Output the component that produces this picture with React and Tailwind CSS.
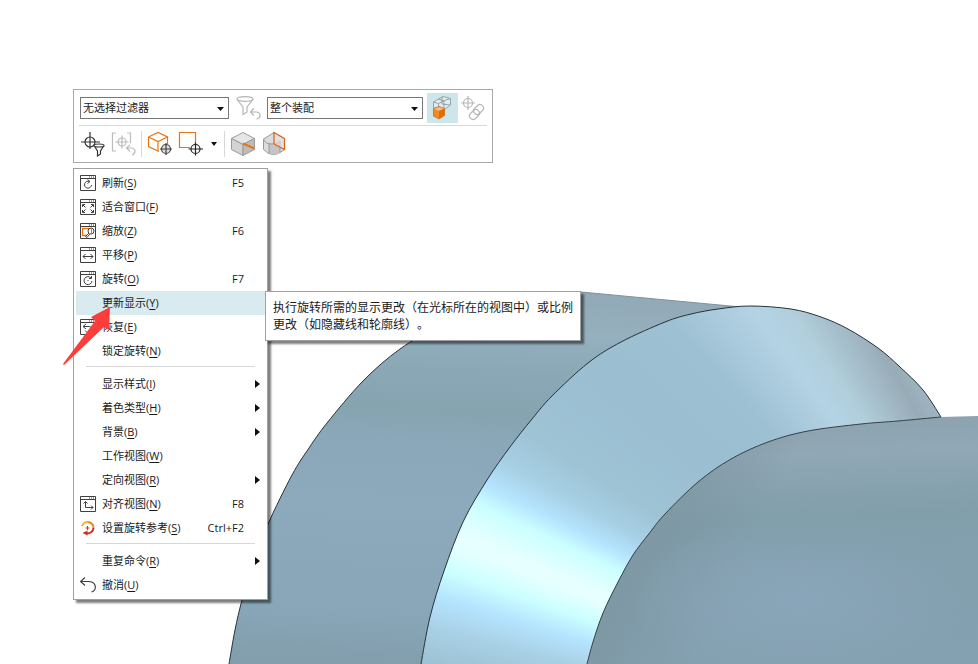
import React from "react";

const INK = "#3f3f3f";
const ORANGE = "#e87511";

// Smooth curve through a list of points
const curve = (points) => {
  let d = `M${points[0][0]} ${points[0][1]}`;
  for (let i = 0; i < points.length - 1; i++) {
    const p0 = points[i - 1] || points[i];
    const p1 = points[i];
    const p2 = points[i + 1];
    const p3 = points[i + 2] || p2;
    d += `C${p1[0] + (p2[0] - p0[0]) / 6} ${p1[1] + (p2[1] - p0[1]) / 6}`;
    d += ` ${p2[0] - (p3[0] - p1[0]) / 6} ${p2[1] - (p3[1] - p1[1]) / 6}`;
    d += ` ${p2[0]} ${p2[1]}`;
  }
  return d;
};

const OUTER_EDGE = curve([
  [229, 664], [235, 630], [242, 600], [253, 562], [268, 524], [292, 475], [309, 448], [327, 423],
  [363, 381], [400, 349], [440, 326], [500, 302], [581, 292],
]);
const RING_EDGE = curve([
  [421, 664], [430, 617], [444, 571], [463, 522], [487, 480], [510, 447], [532, 419], [552, 396],
  [588, 363], [621, 342], [665, 322], [691, 314], [718, 309], [750, 306], [791, 309], [821, 317],
  [848, 329], [878, 348], [900, 367], [923, 390], [941, 417],
]);
const FRONT_EDGE = curve([
  [587, 664], [593, 642], [603, 613], [618, 582], [633, 555], [648, 535], [665, 514], [698, 482],
  [731, 459], [768, 442], [808, 431], [861, 424], [898, 421], [941, 417],
]);

const ModelView = () => (
  <svg
    className="absolute inset-0 h-full w-full"
    viewBox="0 0 978 664"
    preserveAspectRatio="xMidYMid slice"
    aria-hidden="true"
  >
    <defs>
      <linearGradient id="back" gradientUnits="userSpaceOnUse" x1="520" y1="290" x2="500" y2="664">
        <stop offset="0" stopColor="#92a9b6" />
        <stop offset="0.11" stopColor="#95b0be" />
        <stop offset="0.22" stopColor="#8aa8b6" />
        <stop offset="0.33" stopColor="#86a3b0" />
        <stop offset="0.42" stopColor="#8aa8b9" />
        <stop offset="0.6" stopColor="#8caabc" />
        <stop offset="0.88" stopColor="#88a6b8" />
        <stop offset="1" stopColor="#839fae" />
      </linearGradient>
      <linearGradient id="front" gradientUnits="userSpaceOnUse" x1="860" y1="424" x2="870" y2="664">
        <stop offset="0" stopColor="#8da3b0" />
        <stop offset="0.12" stopColor="#91a8b6" />
        <stop offset="0.24" stopColor="#89a3b0" />
        <stop offset="0.38" stopColor="#819eab" />
        <stop offset="0.6" stopColor="#83a0af" />
        <stop offset="1" stopColor="#84a1b1" />
      </linearGradient>
      <radialGradient id="glow" gradientUnits="userSpaceOnUse" cx="0" cy="0" r="1" gradientTransform="translate(800 600) scale(170 85)">
        <stop offset="0" stopColor="#89a5b9" />
        <stop offset="1" stopColor="#89a5b9" stopOpacity="0" />
      </radialGradient>
      <linearGradient id="edge" gradientUnits="userSpaceOnUse" x1="620" y1="560" x2="720" y2="610">
        <stop offset="0" stopColor="#7d96a2" stopOpacity="0.9" />
        <stop offset="1" stopColor="#7d96a2" stopOpacity="0" />
      </linearGradient>
      <clipPath id="ring">
        <path d={`${RING_EDGE}L978 417V664Z`} />
      </clipPath>
    </defs>

    <path d={`${OUTER_EDGE}L741 307L760 664Z`} fill="url(#back)" />
    <path d={OUTER_EDGE} fill="none" stroke="#26333a" />
    <path d="M581 292L741 307" stroke="#7f929d" />

    {/* Conical face, shaded around its apex */}
    <g clipPath="url(#ring)">
      <foreignObject width="978" height="664">
        <div className="h-full w-full bg-[conic-gradient(from_270deg_at_1120px_805px,#9cc1d3_0deg,#9cc1d3_11.5deg,#a9d1e6_14.5deg,#b5e4ff_17deg,#ccffff_19.2deg,#e6ffff_21.2deg,#e6ffff_22.4deg,#ccffff_25deg,#b5e4ff_26.8deg,#a7d0e5_29deg,#9ec3d5_32deg,#9bbed1_40deg,#9ec0d3_47deg,#b4d3e5_53.5deg,#b0cedb_56.5deg,#a3b9c6_60deg,#98abb7_62.5deg,#9fb4c2_65deg,#9fb4c2_90deg)]" />
      </foreignObject>
    </g>
    <path d={RING_EDGE} fill="none" stroke="#26333a" />

    <path d={`${FRONT_EDGE}L978 416V664Z`} fill="url(#front)" />
    <path d={`${FRONT_EDGE}L978 416V664Z`} fill="url(#edge)" />
    <path d={`${FRONT_EDGE}L978 416V664Z`} fill="url(#glow)" />
    <path d={FRONT_EDGE} fill="none" stroke="#33424a" />
  </svg>
);

/* ---- toolbar icons, 26px grid ---- */

const ToolIcon = ({ children }) => (
  <svg width="26" height="26" viewBox="0 0 26 26" fill="none" aria-hidden="true">
    {children}
  </svg>
);

const ResetFilterIcon = () => (
  <ToolIcon>
    <g stroke="#b5b5b5" strokeWidth="1.2">
      <ellipse cx="9" cy="4" rx="8" ry="2.4" />
      <path d="M1 4.5L7 12V19.5L11 17V12L17 4.5" />
      <path d="M18 13.5L14.5 17L18 20.5M14.5 17H20C25 17 25.500 23 20.500 24" />
    </g>
  </ToolIcon>
);

const AssemblyIcon = () => (
  <ToolIcon>
    <g stroke="#8f9ba0" strokeWidth="0.9" strokeLinejoin="round">
      <path d="M3.500 7L13 1.500L20.500 3.500V10L14.500 14.500L9 12L3.500 13.500Z" fill="#e1ecef" />
      <path d="M3.500 7L8.500 8.500L14.500 5.500L20.500 3.500M8.500 4L14 6V14M8.500 8.500V12M12 2V9L20 10" />
    </g>
    <path d="M3.500 13.500L9 11.500L14.500 13.500V20.500L9 24L3.500 21Z" fill="#f58a1f" stroke="#c86a1b" strokeWidth="0.8" />
    <path d="M4 13.700L9 12L14 13.700L9 16Z" fill="#f6b98a" />
    <path d="M9 16L14.200 13.700V20.300L9 23.500Z" fill="#e06c08" />
  </ToolIcon>
);

const LinkPointIcon = () => (
  <ToolIcon>
    <g stroke="#b7b7b7" strokeWidth="1.2">
      <circle cx="8" cy="8" r="4.500" />
      <path d="M8 1V15M1 8H15" />
      <rect x="13" y="11" width="11" height="7" rx="3.500" transform="rotate(-42 18.500 14.500)" />
      <rect x="9" y="16" width="11" height="7" rx="3.500" transform="rotate(-42 14.500 19.500)" />
    </g>
  </ToolIcon>
);

const PointFilterIcon = () => (
  <ToolIcon>
    <g stroke="#333" strokeWidth="1.2">
      <circle cx="10" cy="11" r="5" />
      <path d="M10 1V18M1 11H20" />
      <path d="M14 14.500L17.500 20V25L20.500 23V20L24 14.500" fill="#fff" />
      <ellipse cx="19" cy="14.500" rx="5" ry="1.500" fill="#fff" />
    </g>
  </ToolIcon>
);

const ResetPointIcon = () => (
  <ToolIcon>
    <g stroke="#bcbcbc" strokeWidth="1.2">
      <path d="M5 2H1.500V20H5M16 2H19.500V12" />
      <circle cx="11" cy="11" r="4" />
      <path d="M11 4.500V17.500M4.500 11H17.500" />
      <path d="M19 14L15.500 17L19 20.500M15.500 17H21C25 17.500 25 23 21 24" />
    </g>
  </ToolIcon>
);

const CubePointIcon = () => (
  <ToolIcon>
    <path
      d="M1.500 6L11 1.500L20.500 6V13M1.500 6V15.500L12 20.500M1.500 6L11 10.500L20.500 6M11 10.500V20"
      stroke={ORANGE}
      strokeWidth="1.2"
    />
    <g stroke="#444" strokeWidth="1.2">
      <circle cx="19" cy="18" r="4.500" fill="#ddd" />
      <path d="M19 12V24M13 18H25" />
    </g>
  </ToolIcon>
);

const RectPointIcon = () => (
  <ToolIcon>
    <path d="M12 16.500H1.500V1.500H17.500V13" stroke={ORANGE} strokeWidth="1.2" />
    <g stroke="#222" strokeWidth="1.2">
      <circle cx="17.500" cy="18" r="4.500" />
      <path d="M17.500 11.500V24.500M10.500 18H25" />
    </g>
  </ToolIcon>
);

const GreyCubeIcon = () => (
  <ToolIcon>
    <g stroke="#9a9a9a" strokeLinejoin="round">
      <path d="M1.500 7.500L13 1.500L24.500 7.500L13 13.500Z" fill="#e6e6e6" />
      <path d="M1.500 7.500L13 13.500V24.500L1.500 18.500Z" fill="#d3d3d3" />
      <path d="M24.500 7.500L13 13.500V24.500L24.500 18.500Z" fill="#bcbcbc" />
    </g>
    <path d="M13 12.500L24.500 17.500" stroke={ORANGE} strokeWidth="2" />
  </ToolIcon>
);

const RoundCubeIcon = () => (
  <ToolIcon>
    <path d="M2.500 8L13 1.500L23.500 7.500V18.500L19 21.500Q11 27 2.500 18.500Z" fill="#dcdcdc" stroke="#999" />
    <path d="M11 13Q16 13 19 10V22Q14 25 8 23V12Z" fill="#c4c4c4" />
    <path d="M2.500 8Q4 13 11 13Q16 13 19 10V22M8 12.500V23" stroke="#999" />
    <path d="M13 1.500L23.500 7.500V18.500L13 13Z" fill="#e4e4e4" fillOpacity="0.6" />
    <path d="M13 13V1.500L23.500 7.500V18.500L13 13" stroke="#d9631c" strokeWidth="1.2" />
  </ToolIcon>
);

/* ---- menu icons, 16px grid ---- */

const WindowIcon = ({ children }) => (
  <svg width="16" height="16" viewBox="0 0 16 16" fill="none" stroke={INK} aria-hidden="true">
    <path d="M0.500 0.500H15.500V15.500H0.500ZM0.500 3.500H15.500" />
    <path d="M9 2H10M11 2H12M13 2H14" />
    {children}
  </svg>
);

const RefreshIcon = () => (
  <WindowIcon>
    <path d="M9.500 6.500A3.500 3.500 0 1 0 11.500 10M7.500 4.500L10 6.500L7.500 8.500" />
  </WindowIcon>
);

const FitIcon = () => (
  <WindowIcon>
    <path d="M2.500 8V5.500H5M11 5.500H13.500V8M2.500 11V13.500H5M11 13.500H13.500V11M3 6L5.500 8.500M13 6L10.500 8.500M3 13L5.500 10.500M13 13L10.500 10.500" />
  </WindowIcon>
);

const ZoomIcon = () => (
  <WindowIcon>
    <path d="M7 12.500H2.500V5.500H9" stroke={ORANGE} strokeWidth="1.3" />
    <circle cx="11" cy="8" r="3" fill="#fff" />
    <path d="M11.500 5V11" stroke={ORANGE} />
    <path d="M9 10L5.500 13.500L7 14.500L10 11" fill="#fff" />
  </WindowIcon>
);

const PanIcon = () => (
  <WindowIcon>
    <path d="M3 9.500H13M5.500 7L3 9.500L5.500 12M10.500 7L13 9.500L10.500 12" />
  </WindowIcon>
);

const RotateIcon = () => (
  <WindowIcon>
    <path d="M11 7A4 4 0 1 0 12 10M11.500 5V7.500H9" />
    <path d="M7.500 9.500H8.500" />
  </WindowIcon>
);

const RestoreIcon = () => (
  <WindowIcon>
    <path d="M6 5L3 7.500L6 10M3 7.500H9C13 8 13 13 9 13.500M5 11.500L7 13.500" />
  </WindowIcon>
);

const AlignIcon = () => (
  <WindowIcon>
    <path d="M5.500 6V11.500H13M3.500 7.500L5.500 5.500L7.500 7.500M11 9.500L13 11.500L11 13.500" />
  </WindowIcon>
);

const RotateRefIcon = () => (
  <svg width="16" height="16" viewBox="0 0 16 16" fill="none" aria-hidden="true">
    <path d="M2 6Q3.500 1.800 8 2" stroke="#f8b820" strokeWidth="2" />
    <path d="M8 2Q13.500 3 13.500 8" stroke="#f08a1d" strokeWidth="2" />
    <path d="M13.500 8Q13 13 7 13.500" stroke="#dc2b1c" strokeWidth="2" />
    <path d="M7.500 10.500L2.500 13L7.500 15.500Z" fill="#dc2b1c" />
    <path d="M7.500 6V10M5.500 8H9.500" stroke="#d9341f" />
  </svg>
);

const UndoIcon = () => (
  <svg width="16" height="16" viewBox="0 0 16 16" fill="none" stroke={INK} strokeWidth="1.2" aria-hidden="true">
    <path d="M5 0.500L0.500 4.500L5 8.500M0.500 4.500H9C17 5 17 14 11.500 15" />
  </svg>
);

const FilterSelect = ({ label, value, className }) => (
  <span className={`relative ${className}`}>
    <select
      aria-label={label}
      className="block h-[22px] w-full appearance-none border border-[#777] bg-white pl-[2px] text-[11px] text-[#1a1a1a]"
    >
      <option>{value}</option>
    </select>
    <svg className="pointer-events-none absolute right-[5px] top-[10px]" width="7" height="4" viewBox="0 0 7 4" aria-hidden="true">
      <path d="M0 0H7L3.500 4Z" fill="#111" />
    </svg>
  </span>
);

const SelectionToolbar = () => (
  <div role="toolbar" aria-label="选择" className="w-[420px] border border-[#a9a9a9] bg-white px-[5px] pt-[3px]">
    <div className="flex h-[30px] items-center">
      <FilterSelect label="选择过滤器" value="无选择过滤器" className="ml-px w-[149px]" />
      <button type="button" aria-label="重置过滤器" className="ml-[7px]">
        <ResetFilterIcon />
      </button>
      <FilterSelect label="选择范围" value="整个装配" className="ml-[5px] w-[156px]" />
      <button type="button" aria-label="装配" className="ml-1 flex h-[30px] w-[31px] items-center justify-center bg-[#cde6eb]">
        <AssemblyIcon />
      </button>
      <button type="button" aria-label="关联点" className="ml-[2px]">
        <LinkPointIcon />
      </button>
    </div>
    <div className="mt-[2px] border-t border-[#d8d8d8]" />
    <div className="flex h-9 items-center">
      <button type="button" aria-label="点过滤器" className="ml-px">
        <PointFilterIcon />
      </button>
      <button type="button" aria-label="重置点" className="ml-[5px]">
        <ResetPointIcon />
      </button>
      <span className="ml-1 h-[26px] w-px bg-[#d8d8d8]" />
      <button type="button" aria-label="体上的点" className="ml-[5px]">
        <CubePointIcon />
      </button>
      <button type="button" aria-label="矩形选择" className="ml-[5px]">
        <RectPointIcon />
      </button>
      <button type="button" aria-label="更多" className="ml-[7px]">
        <svg width="6" height="4" viewBox="0 0 6 4" aria-hidden="true">
          <path d="M0 0H6L3 4Z" fill="#111" />
        </svg>
      </button>
      <span className="ml-[7px] h-[26px] w-px bg-[#d8d8d8]" />
      <button type="button" aria-label="面上的边" className="ml-[5px]">
        <GreyCubeIcon />
      </button>
      <button type="button" aria-label="相切面" className="ml-[5px]">
        <RoundCubeIcon />
      </button>
    </div>
  </div>
);

const menuGroups = [
  [
    { label: "刷新", hotkey: "S", shortcut: "F5", icon: <RefreshIcon /> },
    { label: "适合窗口", hotkey: "F", icon: <FitIcon /> },
    { label: "缩放", hotkey: "Z", shortcut: "F6", icon: <ZoomIcon /> },
    { label: "平移", hotkey: "P", icon: <PanIcon /> },
    { label: "旋转", hotkey: "O", shortcut: "F7", icon: <RotateIcon /> },
    {
      label: "更新显示",
      hotkey: "Y",
      active: true,
      tip: "执行旋转所需的显示更改（在光标所在的视图中）或比例更改（如隐藏线和轮廓线）。",
    },
    { label: "恢复", hotkey: "E", icon: <RestoreIcon /> },
    { label: "锁定旋转", hotkey: "N" },
  ],
  [
    { label: "显示样式", hotkey: "I", submenu: true },
    { label: "着色类型", hotkey: "H", submenu: true },
    { label: "背景", hotkey: "B", submenu: true },
    { label: "工作视图", hotkey: "W" },
    { label: "定向视图", hotkey: "R", submenu: true },
    { label: "对齐视图", hotkey: "N", shortcut: "F8", icon: <AlignIcon /> },
    { label: "设置旋转参考", hotkey: "S", shortcut: "Ctrl+F2", icon: <RotateRefIcon /> },
  ],
  [
    { label: "重复命令", hotkey: "R", submenu: true },
    { label: "撤消", hotkey: "U", icon: <UndoIcon /> },
  ],
];

const MenuItem = ({ item }) => (
  <li role="none" className="relative">
    <button
      type="button"
      role="menuitem"
      className={`flex h-6 w-full items-center pl-1 text-left ${item.active ? "bg-[#d9ebef]" : ""}`}
    >
      <span className="mr-[6px] w-4 shrink-0">{item.icon}</span>
      <span className="flex-1">
        {item.label}(<u className="underline-offset-2">{item.hotkey}</u>)
      </span>
      <span>{item.shortcut}</span>
      <span className="w-[21px] pl-[11px]">
        {item.submenu && (
          <svg width="5" height="8" viewBox="0 0 5 8" aria-hidden="true">
            <path d="M0 0L5 4L0 8Z" fill="#111" />
          </svg>
        )}
      </span>
    </button>
    {item.tip && (
      <>
        <div
          role="tooltip"
          className="absolute left-full top-0 z-20 w-[316px] border border-[#a0a0a0] bg-white px-[7px] py-[7px] text-[12px] leading-[17px] shadow-[3px_3px_2px_rgba(0,0,0,0.5)] [text-spacing-trim:space-all]"
        >
          {item.tip}
        </div>
        <svg className="absolute -left-[14px] top-4 z-20" width="50" height="60" viewBox="0 0 50 60" aria-hidden="true">
          <path d="M48 0L47 23L42 20L2 58L1 57L33 14L29 10Z" fill="#fc3d39" />
        </svg>
      </>
    )}
  </li>
);

const ContextMenu = () => (
  <div className="w-[195px] border border-[#a0a0a0] bg-white p-[2px] text-[11px] shadow-[3px_3px_2px_rgba(0,0,0,0.5)]">
    {menuGroups.map((group, index) => (
      <ul
        key={index}
        role="menu"
        className={index > 0 ? "before:mx-[10px] before:mb-[5px] before:mt-[3px] before:block before:h-px before:bg-[#d8d8d8]" : ""}
      >
        {group.map((item) => (
          <MenuItem key={item.label} item={item} />
        ))}
      </ul>
    ))}
  </div>
);

const App = () => {
  return (
    <main className="relative min-h-screen overflow-hidden bg-white font-['Open_Sans','Noto_Sans_CJK_SC',sans-serif] text-[#1a1a1a]">
      <ModelView />
      <div className="relative flex flex-col items-start gap-[5px] pb-12 pl-[73px] pt-[89px]">
        <SelectionToolbar />
        <ContextMenu />
      </div>
    </main>
  );
};

export default App;
